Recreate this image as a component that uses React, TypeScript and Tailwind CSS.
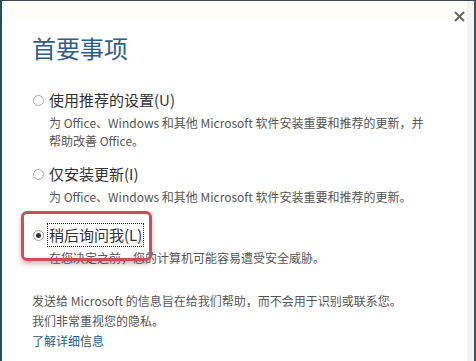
import React from "react";

const font = { fontFamily: '"Noto Sans CJK SC", "Noto Sans", sans-serif' };

function Radio({ checked }: { checked?: boolean }) {
  return (
    <span
      className={
        "ml-[1px] flex h-[11px] w-[11px] shrink-0 items-center justify-center rounded-full border bg-white " +
        (checked ? "border-[#8aa2b8]" : "border-[#a8a8a8]")
      }
    >
      {checked && <span className="h-[5px] w-[5px] rounded-full bg-[#333]" />}
    </span>
  );
}

function Option({
  label,
  lines,
  checked,
  className,
}: {
  label: string;
  lines: string[];
  checked?: boolean;
  className?: string;
}) {
  return (
    <div className={className}>
      <div className="flex items-center gap-[5px]">
        <Radio checked={checked} />
        <span
          className={
            "whitespace-nowrap text-[15px] text-[#333] " +
            (checked ? "border border-dotted border-[#222] px-[1px] leading-[22px] -ml-[2px]" : "leading-[20px]")
          }
        >
          {label}
        </span>
      </div>
      <div className={"pl-[17px] text-[12px] leading-[18px] text-[#555] " + (checked ? "mt-[2px]" : "mt-[4px]")}>
        {lines.map((l) => (
          <div key={l} className="whitespace-nowrap">
            {l}
          </div>
        ))}
      </div>
    </div>
  );
}

export default function App() {
  return (
    <div
      style={font}
      className="relative h-[361px] w-[476px] overflow-hidden border-l-2 border-r-2 border-t border-l-[#24505c] border-r-[#4a4f52] border-t-[#3c4a50] bg-white"
    >
      <div className="absolute left-0 top-0 h-[18px] w-full bg-[#fffdf8]" />
      <div className="absolute right-0 top-0 h-full w-[7px] bg-[#f4f4f4]" />

      {/* close */}
      <button className="absolute left-[451px] top-[9px] flex h-[13px] w-[13px] items-center justify-center text-[#666]">
        <svg width="11" height="11" viewBox="0 0 11 11" fill="none" stroke="currentColor" strokeWidth="2">
          <path d="M1 1l9 9M10 1l-9 9" />
        </svg>
      </button>

      <div className="relative pl-[30px]">
        <h1 className="mt-[32px] text-[24px] leading-[30px] text-[#2e5d8c]">首要事项</h1>

        <Option
          className="mt-[27px]"
          label="使用推荐的设置(U)"
          lines={[
            "为 Office、Windows 和其他 Microsoft 软件安装重要和推荐的更新，并",
            "帮助改善 Office。",
          ]}
        />

        <Option
          className="mt-[14px]"
          label="仅安装更新(I)"
          lines={["为 Office、Windows 和其他 Microsoft 软件安装重要和推荐的更新。"]}
        />

        <Option
          className="mt-[17px]"
          checked
          label="稍后询问我(L)"
          lines={["在您决定之前，您的计算机可能容易遭受安全威胁。"]}
        />

        <div className="mt-[24px] text-[12px] leading-[20px] text-[#555]">
          <div className="whitespace-nowrap">发送给 Microsoft 的信息旨在给我们帮助，而不会用于识别或联系您。</div>
          <div>我们非常重视您的隐私。</div>
          <a href="#" className="text-[#1f5a8e]">
            了解详细信息
          </a>
        </div>
      </div>

      {/* highlight annotation */}
      <div className="pointer-events-none absolute left-[19px] top-[210px] h-[50px] w-[131px] rounded-[6px] border-[3px] border-[#cc4f57] shadow-[0_3px_5px_rgba(120,40,40,0.35)]" />
    </div>
  );
}
